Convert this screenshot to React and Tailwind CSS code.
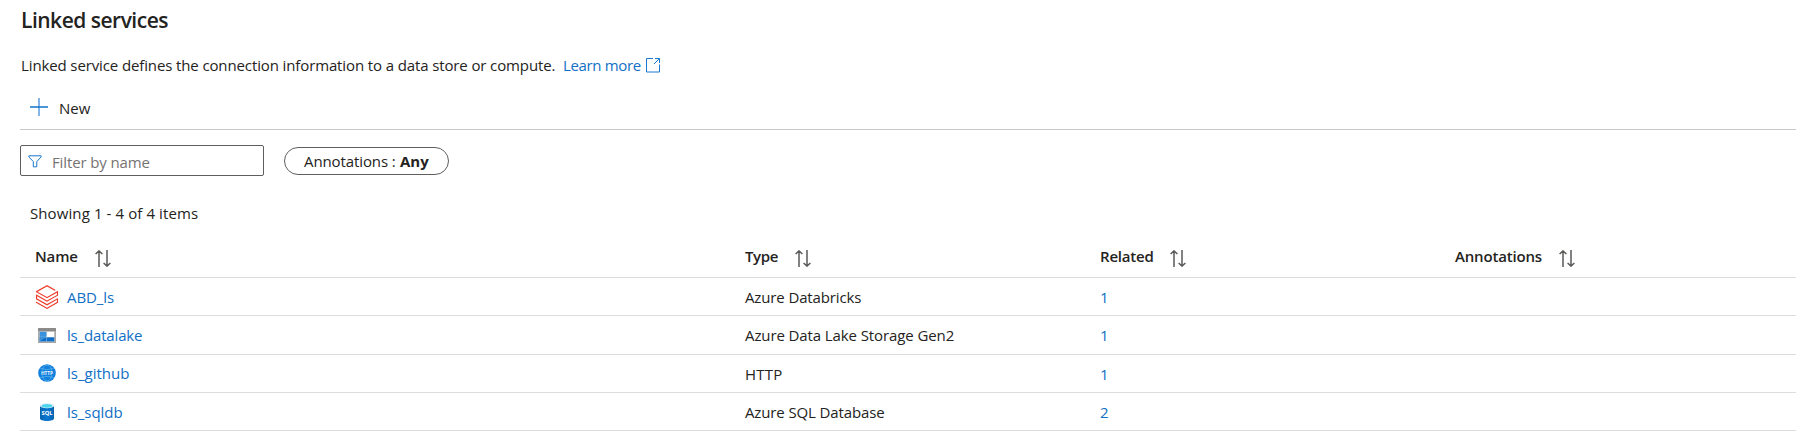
import React from "react";

function PlusIcon() {
  return (
    <svg width="18" height="18" viewBox="0 0 18 18" className="block shrink-0">
      <path d="M9 0v18" stroke="#5a9ede" strokeWidth="1.5" />
      <path d="M0 9h18" stroke="#1273c9" strokeWidth="1.5" />
    </svg>
  );
}

function ExternalIcon() {
  return (
    <svg width="14" height="15" viewBox="0 0 14 15" fill="none" stroke="#1a78cf" className="block shrink-0">
      <path d="M7 .5H.5v13.500h13V6.500" />
      <path d="M9 .5h4.500v4.500M13.400.6 7.900 6.100" />
    </svg>
  );
}

function FunnelIcon() {
  return (
    <svg width="14" height="13" viewBox="0 0 14 13" fill="none" stroke="#1a78cf" className="block shrink-0">
      <path d="M.8.8h12.400v1L8.800 6.600v5.200H5.300V6.600L.8 1.800z" />
    </svg>
  );
}

function SortIcon() {
  return (
    <svg width="16" height="17" viewBox="0 0 16 17" fill="none" stroke="#5c5a58" strokeWidth="1.5" className="block shrink-0">
      <path d="M4 17V1M.6 4 4 .9 7.400 4" />
      <path d="M12 0v16M8.600 13l3.400 3.100 3.400-3.100" />
    </svg>
  );
}

function DatabricksIcon() {
  return (
    <svg width="24" height="24" viewBox="0 0 24 24" fill="#ee3d2c" className="block">
      <path d="M.95 14.184L12 20.403l9.919-5.55v2.21L12 22.662l-10.484-5.96-.565.308v.77L12 24l11.05-6.218v-4.317l-.515-.309L12 19.118l-9.867-5.653v-2.21L12 16.805l11.05-6.218V6.32l-.515-.308L12 11.974 2.647 6.681 12 1.388l7.76 4.368.668-.411v-.566L12 0 .95 6.27v.72L12 13.207l9.919-5.55v2.26L12 15.52 1.516 9.56l-.565.308Z" />
    </svg>
  );
}

function DataLakeIcon() {
  return (
    <svg width="18" height="15" viewBox="0 0 18 15" className="block">
      <path d="M0 .8Q0 0 .8 0h16.400q.8 0 .8.8V15H0z" fill="#a9a8a7" />
      <path d="M0 .8Q0 0 .8 0h16.400q.8 0 .8.8V3H0z" fill="#8b8a89" />
      <path d="M1.700 3.700h14.600v9.800H1.700z" fill="#fff" />
      <path d="M1.700 3.700h6.900v5.200H1.700z" fill="#3a92dc" />
      <path d="M1.700 9.200h6.900v4.300H1.700zM8.900 9.200h7.400v4.300H8.900z" fill="#0f6fc6" />
      <path d="M1.700 9.200h6l-6 4.300z" fill="#3a92dc" />
    </svg>
  );
}

function HttpIcon() {
  return (
    <svg width="18" height="18" viewBox="0 0 18 18" className="block">
      <circle cx="9" cy="9" r="8.800" fill="#1280dc" />
      <g fill="none" stroke="#62b4ee" strokeWidth=".7">
        <ellipse cx="9" cy="9" rx="5" ry="8" />
        <path d="M2.500 4.500q6.500 2.400 13 0M2.500 13.500q6.500-2.400 13 0" />
      </g>
      <path d="M1.500 6.500h15v5h-15z" fill="#1280dc" />
      <text x="9" y="10.800" textAnchor="middle" textLength="12" fontSize="4.800" fontWeight="700" fill="#e8f5ff" fontFamily="Open Sans, sans-serif">HTTP</text>
    </svg>
  );
}

function SqlIcon() {
  return (
    <svg width="14" height="18" viewBox="0 0 14 18" className="block">
      <defs>
        <linearGradient id="sqlBody" x1="0" x2="1">
          <stop offset="0" stopColor="#0463ae" />
          <stop offset=".5" stopColor="#0b78d4" />
          <stop offset="1" stopColor="#0463ae" />
        </linearGradient>
      </defs>
      <path d="M0 2.500v13C0 16.900 3.100 18 7 18s7-1.100 7-2.500v-13z" fill="url(#sqlBody)" />
      <ellipse cx="7" cy="2.700" rx="7" ry="2.600" fill="#e4f3f8" />
      <ellipse cx="7" cy="2.800" rx="5.300" ry="1.900" fill="#4dd5ee" />
      <text x="7" y="12.300" textAnchor="middle" textLength="11" fontSize="5.800" fontWeight="700" fill="#fff" fontFamily="Open Sans, sans-serif">SQL</text>
    </svg>
  );
}

const columns = [
  { label: "Name", width: "w-[42px]", track: "tracking-[-0.15px]" },
  { label: "Type", width: "w-[32px]", track: "tracking-[-0.35px]" },
  { label: "Related", width: "w-[52px]", track: "tracking-[-0.2px]" },
  { label: "Annotations", width: "w-[86px]", track: "tracking-[-0.18px]" },
];

const services = [
  { name: "ABD_ls", track: "tracking-[-0.1px]", type: "Azure Databricks", typeTrack: "tracking-[-0.13px]", related: 1, Icon: DatabricksIcon, row: "h-[38px]", nudge: "" },
  { name: "ls_datalake", track: "tracking-[-0.17px]", type: "Azure Data Lake Storage Gen2", typeTrack: "tracking-[-0.1px]", related: 1, Icon: DataLakeIcon, row: "h-[39px]", nudge: "" },
  { name: "ls_github", track: "tracking-normal", type: "HTTP", typeTrack: "tracking-[0.2px]", related: 1, Icon: HttpIcon, row: "h-[38px]", nudge: "pb-[2px]" },
  { name: "ls_sqldb", track: "tracking-[-0.05px]", type: "Azure SQL Database", typeTrack: "tracking-[-0.12px]", related: 2, Icon: SqlIcon, row: "h-[38px]", nudge: "" },
];

const grid = "grid grid-cols-[710px_355px_355px_356px] border-b border-[#dddddd]";

export default function App() {
  return (
    <main className="h-[448px] w-full bg-white pl-5 pr-[18px] font-['Open_Sans','Noto_Sans',sans-serif] text-[15px] leading-6 text-[#242321] whitespace-nowrap">
      <h1 className="h-[53px] pl-px pt-[6px] text-[21px] leading-7 font-semibold tracking-[-0.5px]">Linked services</h1>
      <div className="flex h-[39px] items-start pl-px">
        <p className="w-[542px] tracking-[-0.12px]">
          Linked service defines the connection information to a data store or compute.
        </p>
        <a href="#learn" className="flex items-center gap-[5px] text-[#1170c6]">
          <span className="w-[78px] tracking-[-0.35px]">Learn more</span>
          <ExternalIcon />
        </a>
      </div>
      <div className="flex h-[38px] items-start border-b border-[#c8c8c8] pl-[10px]">
        <button className="flex items-start gap-[11px] pt-1">
          <span className="pt-[2px]"><PlusIcon /></span>
          <span>New</span>
        </button>
      </div>
      <div className="flex items-start gap-5 pt-[15px]">
        <label className="flex h-[31px] w-[244px] items-start rounded-[2px] border border-[#605e5c] pl-[7px]">
          <span className="pt-[9px]"><FunnelIcon /></span>
          <span className="pl-[10px] pt-[4px] tracking-[-0.12px] text-[#757371]">Filter by name</span>
        </label>
        <button className="mt-[2px] flex h-7 w-[165px] items-center gap-[5px] rounded-full border border-[#605e5c] pl-[19px]">
          <span className="w-[91px] text-left tracking-[-0.1px]">Annotations :</span>
          <span className="font-bold">Any</span>
        </button>
      </div>
      <p className="h-[43px] pl-[10px] pt-[25px] tracking-[0.1px]">Showing 1 - 4 of 4 items</p>
      <section className="pt-5">
        <div className={`${grid} h-[39px] font-semibold`}>
          {columns.map((c) => (
            <div key={c.label} className="flex items-start gap-[18px] pl-[15px] pt-[5px]">
              <span className={`${c.width} ${c.track}`}>{c.label}</span>
              <span className="pt-[6px]"><SortIcon /></span>
            </div>
          ))}
        </div>
        {services.map(({ Icon, ...s }) => (
          <div key={s.name} className={`${grid} ${s.row} items-center`}>
            <div className={`flex items-center pl-[15px] ${s.nudge}`}>
              <span className="flex w-6 justify-center"><Icon /></span>
              <a href="#service" className={`pl-2 text-[#1170c6] ${s.track}`}>{s.name}</a>
            </div>
            <span className={`pl-[15px] ${s.typeTrack}`}>{s.type}</span>
            <a href="#related" className="pl-[15px] text-[#1170c6]">{s.related}</a>
          </div>
        ))}
      </section>
    </main>
  );
}
